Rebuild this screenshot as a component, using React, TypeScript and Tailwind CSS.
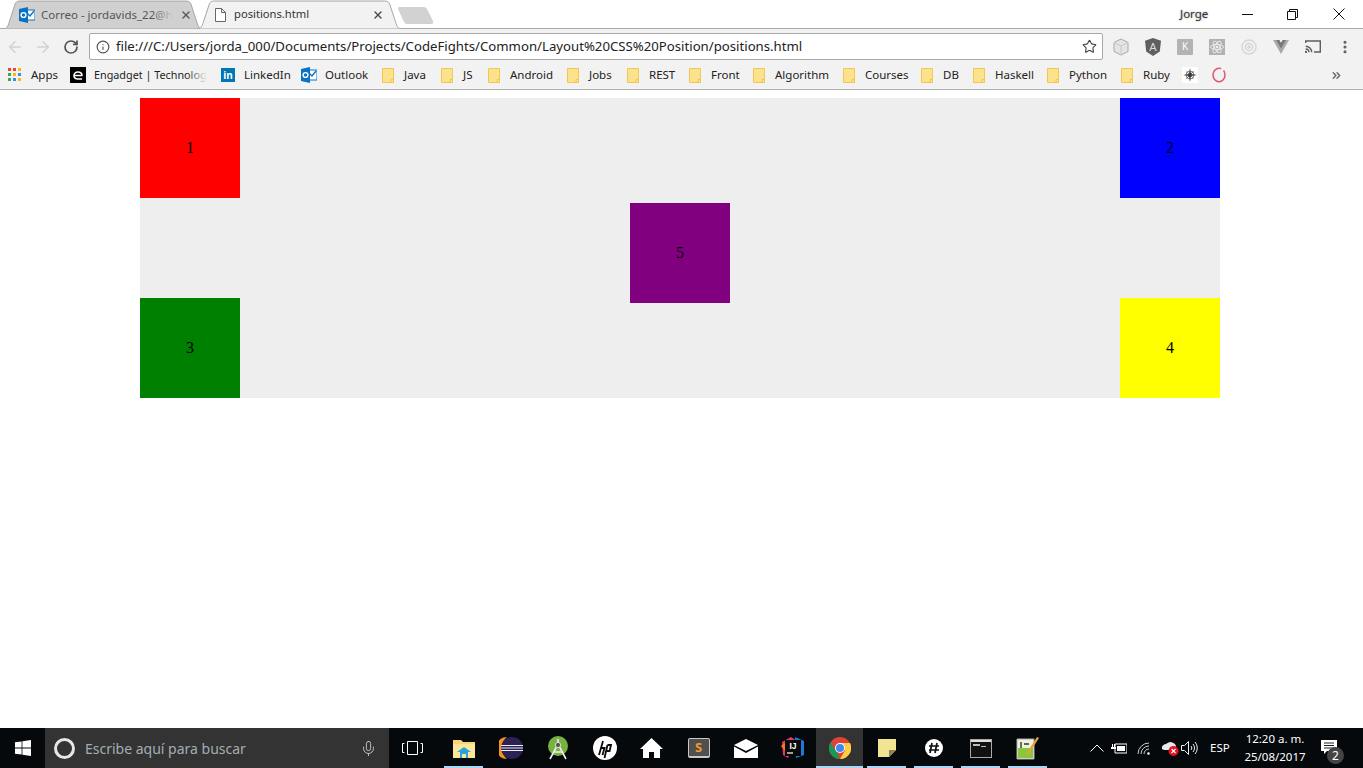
import { ArrowLeft, ArrowRight, RotateCw, Info, Star, EllipsisVertical, ChevronsRight, Mic, X } from "lucide-react"

const bookmarkFolders = [
  { name: "Java", width: "w-[59px]" },
  { name: "JS", width: "w-[47px]" },
  { name: "Android", width: "w-[79px]" },
  { name: "Jobs", width: "w-[60px]" },
  { name: "REST", width: "w-[62px]" },
  { name: "Front", width: "w-[64px]" },
  { name: "Algorithm", width: "w-[90px]" },
  { name: "Courses", width: "w-[78px]" },
  { name: "DB", width: "w-[52px]" },
  { name: "Haskell", width: "w-[74px]" },
  { name: "Python", width: "w-[74px]" },
  { name: "Ruby", width: "w-[61px]" },
]

function OutlookIcon() {
  return (
    <svg width="16" height="16" viewBox="0 0 16 16" className="shrink-0">
      <rect x="6" y="3" width="10" height="10" fill="#fff" stroke="#0a72c4" />
      <path d="M8 6l3 3 4-5" fill="none" stroke="#0a72c4" strokeWidth="1.4" />
      <path d="M0 2l9-2v16l-9-2z" fill="#0a72c4" />
      <circle cx="4.5" cy="8" r="2.4" fill="none" stroke="#fff" strokeWidth="1.4" />
    </svg>
  )
}

function Folder() {
  return (
    <svg width="12" height="15" viewBox="0 0 12 15" className="shrink-0">
      <path d="M.5.5h11v14H.5z" fill="#fde28d" stroke="#f0c850" />
      <path d="M9 11.5h2.5v3H9z" fill="#fde28d" stroke="#f0c850" />
    </svg>
  )
}

function TabShape({ fill }: { fill: string }) {
  return (
    <svg viewBox="0 0 200 28" preserveAspectRatio="none" className="absolute inset-0 w-full h-full">
      <path
        d="M0 28 C4 28 5 25 6 22 L12 4 C13 2 14 1 17 1 L183 1 C186 1 187 2 188 4 L194 22 C195 25 196 28 200 28 Z"
        fill={fill}
        stroke="#a6a6a6"
        vectorEffect="non-scaling-stroke"
      />
    </svg>
  )
}

function TitleBar() {
  return (
    <div className="h-[29px] border-b border-[#a9a9a9] bg-white flex items-stretch">
      <div className="relative ml-[3px] w-[200px] h-[29px] flex items-center text-[11.5px] text-[#555]">
        <TabShape fill="#d0d0d0" />
        <div className="relative ml-[16px] mr-[6px]"><OutlookIcon /></div>
        <div className="relative w-[132px] whitespace-nowrap">
          Correo - jordavids_22@h
          <div className="absolute inset-y-0 right-0 w-5 bg-linear-to-r from-transparent to-[#d0d0d0]" />
        </div>
        <X size={12} strokeWidth={2.8} className="relative ml-[7px] text-[#5a5a5a]" />
      </div>
      <div className="relative -ml-[6px] w-[205px] h-[29px] flex items-center text-[11.2px] text-[#333]">
        <TabShape fill="#f2f2f2" />
        <svg width="11" height="14" viewBox="0 0 11 14" className="relative ml-[18px] mr-[8px]">
          <path d="M.5.5h6l4 4v9H.5z M6.5.5v4h4" fill="#fff" stroke="#666" />
        </svg>
        <div className="relative w-[139px] whitespace-nowrap">positions.html</div>
        <X size={12} strokeWidth={2.8} className="relative -ml-[1px] text-[#4a4a4a]" />
      </div>
      <svg width="36" height="18" viewBox="0 0 36 18" className="-ml-[4px] mt-[7px]">
        <path d="M1 0h25q2 0 3 2l6 12q1 3-2 3H9q-2 0-3-2L0 2q0-2 1-2z" fill="#d2d2d2" />
      </svg>
      <div className="flex-1" />
      <div className="w-[44px] flex items-center text-[11.5px] text-[#333] [text-shadow:0_0_2px_#999]">Jorge</div>
      <div className="w-[46px] flex items-center justify-center">
        <svg width="11" height="1" viewBox="0 0 11 1"><path d="M0 .5h11" stroke="#111" /></svg>
      </div>
      <div className="w-[44px] flex items-center justify-center">
        <svg width="11" height="11" viewBox="0 0 11 11" fill="none" stroke="#111">
          <path d="M.5 2.5h8v8h-8z M2.5 2.5v-2h8v8h-2" />
        </svg>
      </div>
      <div className="w-[49px] flex items-center justify-center">
        <svg width="12" height="12" viewBox="0 0 12 12" stroke="#111"><path d="M.5.5l11 11M11.5.5l-11 11" /></svg>
      </div>
    </div>
  )
}

function ExtensionIcons() {
  return (
    <div className="flex items-center">
      <div className="w-[32px] flex justify-center">
        <svg width="18" height="18" viewBox="0 0 18 18">
          <path d="M9 1l7 3.5v9L9 17l-7-3.5v-9z" fill="#e4e4e4" stroke="#a8a8a8" />
          <path d="M2 4.5L9 8l7-3.5M9 8v9" fill="none" stroke="#c8c8c8" />
        </svg>
      </div>
      <div className="w-[32px] flex justify-center">
        <svg width="16" height="18" viewBox="0 0 16 18">
          <path d="M8 0l8 2.8-1.2 10.6L8 18l-6.8-4.6L0 2.8z" fill="#5f5f5f" />
          <text x="8" y="13" textAnchor="middle" fontSize="11" fill="#ddd" fontFamily="Liberation Sans, sans-serif">A</text>
        </svg>
      </div>
      <div className="w-[32px] flex justify-center">
        <div className="w-4 h-4 bg-[#b3b3b3] rounded-[1px] flex items-center justify-center text-[10px] text-white">K</div>
      </div>
      <div className="w-[32px] flex justify-center">
        <svg width="16" height="16" viewBox="0 0 16 16">
          <rect width="16" height="16" fill="#b0b0b0" />
          <g fill="none" stroke="#eee" strokeWidth=".9">
            <ellipse cx="8" cy="8" rx="6.5" ry="2.6" />
            <ellipse cx="8" cy="8" rx="6.5" ry="2.6" transform="rotate(60 8 8)" />
            <ellipse cx="8" cy="8" rx="6.5" ry="2.6" transform="rotate(120 8 8)" />
          </g>
          <circle cx="8" cy="8" r="1.3" fill="#eee" />
        </svg>
      </div>
      <div className="w-[32px] flex justify-center">
        <svg width="16" height="16" viewBox="0 0 16 16" fill="none" stroke="#d6d6d6" strokeWidth="1.5">
          <circle cx="8" cy="8" r="7" />
          <circle cx="8" cy="8" r="3.6" />
          <circle cx="8" cy="8" r="1" fill="#d6d6d6" />
        </svg>
      </div>
      <div className="w-[32px] flex justify-center">
        <svg width="16" height="14" viewBox="0 0 16 14">
          <path d="M0 0h6.2L8 3l1.8-3H16L8 14z" fill="#a9a9a9" />
          <path d="M3.2 0h3L8 3l1.8-3h3L8 8.4z" fill="#777" />
        </svg>
      </div>
      <div className="w-[32px] flex justify-center">
        <svg width="16" height="13" viewBox="0 0 16 13" fill="none" stroke="#5f5f5f" strokeWidth="1.4">
          <path d="M.7 3V1h14.6v11H9" />
          <path d="M.7 6.2a6 6 0 0 1 6 6M.7 9a3.2 3.2 0 0 1 3.2 3.2" />
          <circle cx=".9" cy="12" r=".5" fill="#5f5f5f" />
        </svg>
      </div>
      <div className="w-[32px] flex justify-center"><EllipsisVertical size={16} strokeWidth={2.6} className="text-[#5f5f5f]" /></div>
    </div>
  )
}

function Toolbar() {
  return (
    <div className="h-[33px] pt-[2px] bg-[#f2f2f2] flex items-center">
      <ArrowLeft size={18} className="ml-[6px] text-[#d2d2d2]" />
      <ArrowRight size={18} className="ml-[10px] text-[#d2d2d2]" />
      <RotateCw size={16} strokeWidth={2.6} className="ml-[11px] text-[#555]" />
      <div className="ml-[10px] w-[1014px] h-[27px] bg-white border border-[#a9a9a9] rounded-[2px] flex items-center text-[13.2px] text-[#222]">
        <Info size={14} strokeWidth={2} className="ml-[6px] mr-[6px] text-[#555]" />
        <span className="flex-1 whitespace-nowrap">file:///C:/Users/jorda_000/Documents/Projects/CodeFights/Common/Layout%20CSS%20Position/positions.html</span>
        <Star size={15} strokeWidth={1.8} className="mr-[5px] text-[#444]" />
      </div>
      <div className="ml-[2px]"><ExtensionIcons /></div>
    </div>
  )
}

function BookmarksBar() {
  return (
    <div className="h-[28px] pb-[1px] bg-[#f2f2f2] border-b border-[#b0b0b0] flex items-center pl-[8px] text-[11.5px] text-[#222] whitespace-nowrap">
      <div className="w-[62px] flex items-center">
        <svg width="14" height="14" viewBox="0 0 14 14" className="mr-[9px]">
          <path d="M0 0h3v3H0z" fill="#e8453c" /><path d="M5 0h3v3H5z" fill="#e8453c" /><path d="M10 0h3v3h-3z" fill="#fbbc05" />
          <path d="M0 5h3v3H0z" fill="#34a853" /><path d="M5 5h3v3H5z" fill="#fbbc05" /><path d="M10 5h3v3h-3z" fill="#4285f4" />
          <path d="M0 10h3v3H0z" fill="#34a853" /><path d="M5 10h3v3H5z" fill="#4285f4" /><path d="M10 10h3v3h-3z" fill="#fbbc05" />
        </svg>
        Apps
      </div>
      <div className="w-[151px] flex items-center">
        <div className="w-4 h-4 bg-black mr-[8px] flex items-center justify-center shrink-0">
          <svg width="10" height="9" viewBox="0 0 10 9" fill="none" stroke="#fff" strokeWidth="1.6" strokeLinejoin="round">
            <path d="M1.500 4.500h7.500C9 2 7.500 1 5 1S1 2.500 1 4.500 2.500 8 5 8h4" />
          </svg>
        </div>
        <div className="relative w-[113px] text-[10.8px]">
          Engadget | Technolog
          <div className="absolute inset-y-0 right-0 w-5 bg-linear-to-r from-transparent to-[#f2f2f2]" />
        </div>
      </div>
      <div className="w-[80px] flex items-center">
        <div className="w-[14px] h-[14px] bg-[#0077b5] mr-[9px] flex items-center justify-center text-white text-[10px] font-bold leading-none">in</div>
        LinkedIn
      </div>
      <div className="w-[81px] flex items-center">
        <div className="mr-[8px]"><OutlookIcon /></div>
        Outlook
      </div>
      {bookmarkFolders.map((folder) => (
        <div key={folder.name} className={`${folder.width} flex items-center gap-[10px]`}>
          <Folder />
          {folder.name}
        </div>
      ))}
      <div className="w-[30px] flex items-center">
        <svg width="16" height="16" viewBox="0 0 16 16">
          <rect width="16" height="16" fill="#fff" />
          <circle cx="8" cy="8" r="4" fill="none" stroke="#888" />
          <path d="M8 1l1 6 6 1-6 1-1 6-1-6-6-1 6-1zM3.500 3.500l4 3.500 1 1 4 4.500-4.500-4-1-1zM12.500 3.500l-4 4.500-1 1-4 3.500 3.500-4.500 1-1z" fill="#333" />
        </svg>
      </div>
      <svg width="14" height="16" viewBox="0 0 14 16" fill="none" stroke="#e0566d" strokeWidth="1.5" className="-mt-[1px]">
        <ellipse cx="7" cy="8" rx="6" ry="6.800" strokeDasharray="32 3" />
      </svg>
      <ChevronsRight size={13} strokeWidth={2.6} className="ml-[104px] text-[#666]" />
    </div>
  )
}

function Box({ color, label }: { color: string; label: string }) {
  return (
    <div className={`w-[100px] h-[100px] ${color} flex items-center justify-center text-black text-[16px]`}>
      {label}
    </div>
  )
}

function Page() {
  return (
    <main className="flex-1 bg-white pt-2 [font-family:'Liberation_Serif',serif]">
      <div className="relative ml-[140px] w-[1080px] h-[300px] bg-[#eeeeee] flex flex-col justify-between">
        <div className="flex justify-between">
          <Box color="bg-[#ff0000]" label="1" />
          <Box color="bg-[#0000ff]" label="2" />
        </div>
        <div className="flex justify-between">
          <Box color="bg-[#008000]" label="3" />
          <Box color="bg-[#ffff00]" label="4" />
        </div>
        <div className="absolute left-[490px] top-[105px]">
          <Box color="bg-[#800080]" label="5" />
        </div>
      </div>
    </main>
  )
}

function ChromeLogo() {
  return (
    <svg width="22" height="22" viewBox="0 0 22 22">
      <circle cx="11" cy="11" r="11" fill="#db4437" />
      <path d="M11 22A11 11 0 0 1 1.500 5.500L6.500 13.600z" fill="#0f9d58" />
      <path d="M11 22l5-8.500L11 6h10a11 11 0 0 1-10 16z" fill="#ffcd40" />
      <circle cx="11" cy="11" r="5" fill="#fff" />
      <circle cx="11" cy="11" r="4" fill="#4285f4" />
    </svg>
  )
}

const taskbarApps = [
  {
    id: "explorer",
    active: true,
    icon: (
      <svg width="22" height="20" viewBox="0 0 22 20">
        <path d="M0 2h8l2 2h12v16H0z" fill="#f7d774" />
        <path d="M0 6h22v14H0z" fill="#fbe69a" />
        <path d="M4 14l7-5 7 5h-3v6H7v-6z" fill="#2aa3df" />
        <path d="M9 16h4v4H9z" fill="#fbe69a" />
      </svg>
    ),
  },
  {
    id: "eclipse",
    icon: (
      <svg width="24" height="22" viewBox="0 0 24 22">
        <path d="M8 0a11 11 0 0 0 0 22A14 14 0 0 1 8 0z" fill="#f7941e" />
        <circle cx="13" cy="11" r="11" fill="#2c2255" />
        <path d="M2 8.500h22M2 11h22M2 13.500h22" stroke="#eee" strokeWidth="1.1" />
      </svg>
    ),
  },
  {
    id: "android",
    icon: (
      <svg width="22" height="24" viewBox="0 0 22 24">
        <circle cx="11" cy="10" r="10" fill="#78b340" />
        <path d="M11 3v4M3 23l8-15 8 15M6 16h10" stroke="#eee" strokeWidth="1.6" fill="none" />
        <circle cx="11" cy="9" r="2.600" fill="#555" stroke="#ddd" />
      </svg>
    ),
  },
  {
    id: "hp",
    icon: (
      <svg width="24" height="24" viewBox="0 0 24 24">
        <circle cx="12" cy="12" r="12" fill="#fff" />
        <path d="M10 5L6 19M8 12h3.500L9.500 19M14.500 9L11.500 22M14.500 9h3.500l-1.400 6h-3.600" stroke="#0a0a0a" strokeWidth="1.8" fill="none" />
      </svg>
    ),
  },
  {
    id: "home",
    icon: (
      <svg width="23" height="20" viewBox="0 0 23 20">
        <path d="M11.500 0L23 11h-3v9h-6v-6H9v6H3v-9H0z" fill="#fff" />
      </svg>
    ),
  },
  {
    id: "sublime",
    icon: (
      <div className="w-[22px] h-[20px] bg-[#4f4f4f] border-b-2 border-x border-t border-[#c8c8c8] rounded-[2px] flex items-center justify-center text-[13px] font-bold text-[#f09a2b] leading-none">S</div>
    ),
  },
  {
    id: "mail",
    icon: (
      <svg width="24" height="19" viewBox="0 0 24 19">
        <path d="M0 6L12 0l12 6-12 6z" fill="#fff" />
        <path d="M0 7.500L12 14l12-6.500V19H0z" fill="#fff" />
      </svg>
    ),
  },
  {
    id: "intellij",
    icon: (
      <svg width="24" height="24" viewBox="0 0 24 24">
        <path d="M1 6l9-5 6 4-9 17-5-3z" fill="#e8336b" />
        <path d="M14 1l9 4v14l-8 3z" fill="#1c7bdc" />
        <path d="M0 10l6-5 4 4-6 6z" fill="#f97a12" />
        <rect x="4" y="4" width="16" height="16" fill="#0a0a0a" />
        <text x="12" y="13" textAnchor="middle" fontSize="8.5" fontWeight="700" fill="#fff" fontFamily="Liberation Sans, sans-serif">IJ</text>
        <path d="M6 17h6" stroke="#fff" strokeWidth="1.2" />
      </svg>
    ),
  },
  { id: "chrome", active: true, highlight: true, icon: <ChromeLogo /> },
  {
    id: "notes",
    active: true,
    icon: (
      <svg width="18" height="18" viewBox="0 0 18 18">
        <path d="M0 0h18v11l-7 7H0z" fill="#f1e594" />
        <path d="M18 11h-7v7z" fill="#8d8456" />
      </svg>
    ),
  },
  {
    id: "slack",
    active: true,
    icon: (
      <svg width="18" height="18" viewBox="0 0 18 18">
        <circle cx="9" cy="9" r="9" fill="#fff" />
        <path d="M7 4l-2 10M12 4l-2 10M4 7h10M4 11h10" stroke="#111" strokeWidth="1.7" />
      </svg>
    ),
  },
  {
    id: "cmd",
    active: true,
    icon: (
      <div className="w-[22px] h-[19px] bg-[#111] border border-[#aaa]">
        <div className="h-[2px] bg-[#ddd]" />
        <div className="ml-[2px] mt-[2px] flex items-center gap-[1px]">
          <div className="w-[7px] h-[2px] bg-[#bbb]" />
          <div className="w-[5px] h-[1px] mt-[2px] bg-[#bbb]" />
        </div>
      </div>
    ),
  },
  {
    id: "notepad",
    active: true,
    icon: (
      <svg width="24" height="24" viewBox="0 0 24 24">
        <path d="M1 3h17v20H1z" fill="#eef3dc" stroke="#aaa" />
        <path d="M2 12h15v10H2z" fill="#8cc63f" />
        <path d="M5 6v6M8 8h5" stroke="#333" strokeWidth="1.4" />
        <path d="M10 18L21 1l2 1-11 17z" fill="#e9a23b" />
      </svg>
    ),
  },
]

function Taskbar() {
  return (
    <div className="h-[40px] bg-[#05090c] flex items-stretch text-white [font-family:'Noto_Sans',sans-serif]">
      <div className="w-[45px] flex items-center justify-center">
        <svg width="16" height="16" viewBox="0 0 16 16" fill="#fff">
          <path d="M0 2.300l6.600-.9v6.200H0zM7.400 1.300L16 0v7.600H7.400zM0 8.400h6.600v6.200L0 13.700zM7.400 8.400H16V16l-8.600-1.300z" />
        </svg>
      </div>
      <div className="w-[344px] bg-[#333333] flex items-center">
        <div className="ml-[9px] w-[21px] h-[21px] rounded-full border-[3px] border-[#e6e6e6]" />
        <span className="ml-[10px] text-[14px] text-[#a3adb5]">Escribe aquí para buscar</span>
        <div className="flex-1" />
        <Mic size={17} strokeWidth={1.3} className="mr-[12px] text-[#c8c8c8]" />
      </div>
      <div className="w-[51px] pr-[4px] flex items-center justify-center">
        <svg width="21" height="14" viewBox="0 0 21 14" fill="none" stroke="#fff">
          <path d="M5.500.5h10v13h-10z M2.500 2.500h-2v9h2 M18.500 2.500h2v9h-2" />
        </svg>
      </div>
      {taskbarApps.map((app) => (
        <div key={app.id} className={`w-[47px] relative flex items-center justify-center ${app.highlight ? "bg-[#333333]" : ""}`}>
          {app.icon}
          {app.active && <div className={`absolute bottom-0 h-[2px] bg-[#a9d6f7] ${app.highlight ? "inset-x-0" : "inset-x-1"}`} />}
        </div>
      ))}
      <div className="flex-1 flex items-center pl-[39px] text-[12px]">
        <svg width="14" height="8" viewBox="0 0 14 8" fill="none" stroke="#fff"><path d="M.5 7.500L7 1l6.500 6.500" /></svg>
        <svg width="16" height="12" viewBox="0 0 16 12" className="ml-[7px]" fill="#fff">
          <path d="M4 2h12v9H4z" fill="none" stroke="#fff" />
          <path d="M6 4h8v5H6zM0 5h5v2H0zM1 2h1v3H1zM3 2h1v3H3z" />
        </svg>
        <svg width="14" height="13" viewBox="0 0 14 13" className="ml-[10px]" fill="none" stroke="#ccc">
          <path d="M1 12a11 11 0 0 1 11-11M4 12a8 8 0 0 1 8-8M7 12a5 5 0 0 1 5-5" />
          <circle cx="11.500" cy="11.500" r="1" fill="#fff" />
        </svg>
        <svg width="19" height="17" viewBox="0 0 19 17" className="ml-[10px]">
          <path d="M1 9a4 4 0 0 1 4-5 6 6 0 0 1 10 2v4H3z" fill="#e8e8e8" />
          <circle cx="12.500" cy="11" r="5" fill="#e81123" />
          <path d="M10.500 9l4 4M14.500 9l-4 4" stroke="#fff" strokeWidth="1.2" />
        </svg>
        <svg width="17" height="14" viewBox="0 0 17 14" className="ml-[1px]" fill="none" stroke="#eee">
          <path d="M.5 4.500h3l4-4v13l-4-4h-3zM10 5a3 3 0 0 1 0 4M12 3a6 6 0 0 1 0 8M14 1a9 9 0 0 1 0 12" />
        </svg>
        <span className="ml-[12px] w-[21px] text-[11.5px]">ESP</span>
        <div className="ml-[13px] w-[62px] text-center leading-[18px] whitespace-nowrap text-[11.5px]">
          <div>12:20 a. m.</div>
          <div>25/08/2017</div>
        </div>
        <div className="relative ml-[15px] w-[26px] h-[26px]">
          <svg width="16" height="14" viewBox="0 0 16 14" className="mt-[5px]">
            <path d="M0 0h16v11H6l-3 3v-3H0z" fill="#fff" />
            <path d="M3 3h10M3 5.500h10M3 8h10" stroke="#222" />
          </svg>
          <div className="absolute right-[3px] -bottom-[3px] w-[17px] h-[17px] rounded-full bg-[#444] text-[12px] leading-[17px] text-center">2</div>
        </div>
      </div>
    </div>
  )
}

export default function App() {
  return (
    <div className="h-screen overflow-hidden flex flex-col bg-white [font-family:'Noto_Sans',sans-serif]">
      <TitleBar />
      <Toolbar />
      <BookmarksBar />
      <Page />
      <Taskbar />
    </div>
  )
}
